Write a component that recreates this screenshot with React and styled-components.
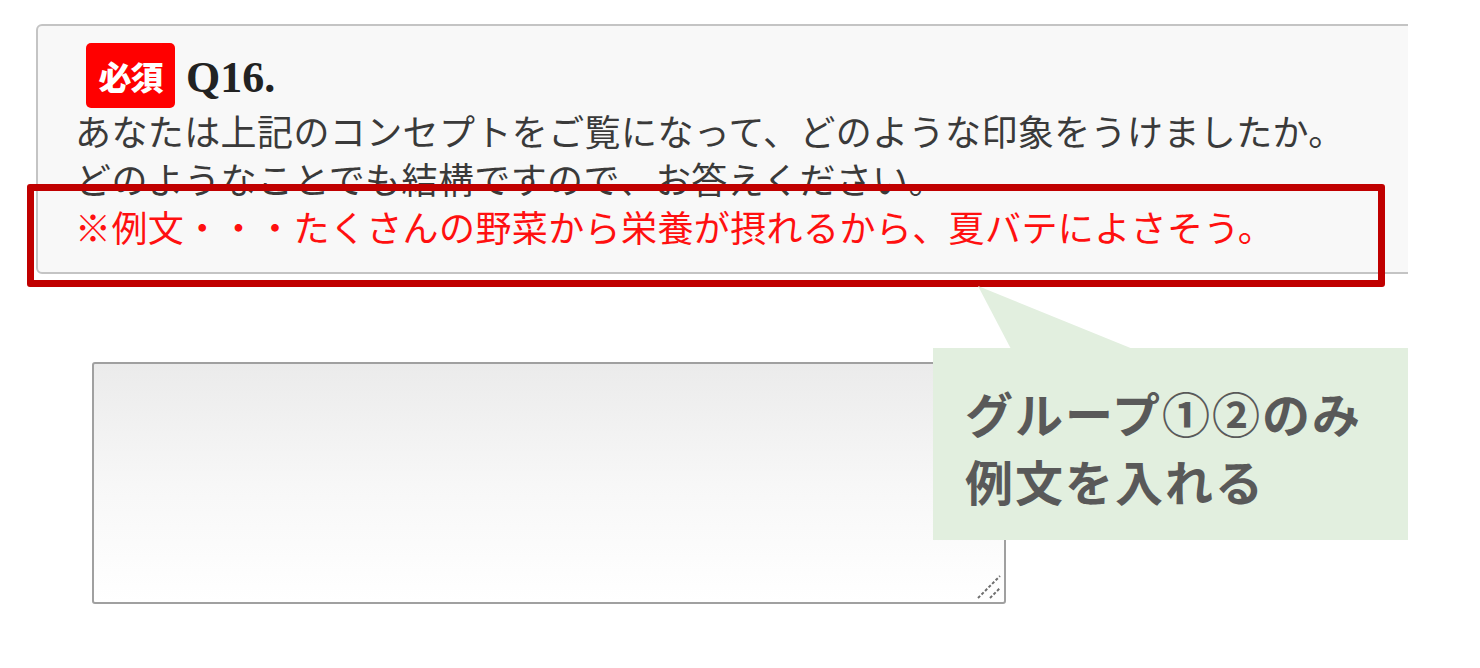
import styled, { createGlobalStyle } from 'styled-components'

const GlobalStyle = createGlobalStyle`
  html, body {
    margin: 0;
    padding: 0;
    background: #ffffff;
  }
  body {
    font-family: "Noto Sans CJK JP", "Noto Sans", sans-serif;
  }
`

const Page = styled.div`
  position: relative;
  width: 1480px;
  height: 668px;
  overflow: hidden;
  padding-top: 24px;
  box-sizing: border-box;
`

const CardClip = styled.div`
  margin-left: 36px;
  width: 1372px;
  overflow: hidden;
`

const Card = styled.section`
  width: 1400px;
  box-sizing: border-box;
  height: 250px;
  background: #f8f8f8;
  border: 2px solid #c4c4c4;
  border-radius: 6px;
  padding: 17px 0 0 37px;
`

const Header = styled.div`
  display: flex;
  align-items: center;
  gap: 11px;
  height: 65px;
  padding-left: 11px;
`

const Badge = styled.span`
  display: flex;
  align-items: center;
  justify-content: center;
  width: 89px;
  height: 65px;
  border-radius: 5px;
  background: #ff0000;
  color: #ffffff;
  font-family: "Noto Sans CJK JP", sans-serif;
  font-weight: 900;
  font-size: 33px;
  letter-spacing: -1px;
`

const QNumber = styled.span`
  font-family: "Liberation Serif", serif;
  font-weight: 700;
  font-size: 44px;
  color: #222;
  margin-top: 4px;
`

const Body = styled.div`
  margin-top: -2px;
`

const Line = styled.p`
  margin: 0;
  font-size: 36px;
  line-height: 48px;
  height: 48px;
  letter-spacing: 0.4px;
  white-space: nowrap;
  color: ${({ $red }) => ($red ? '#ff1010' : '#3a3a3a')};
`

const Highlight = styled.div`
  position: absolute;
  left: 27px;
  top: 184px;
  width: 1358px;
  height: 103px;
  box-sizing: border-box;
  border: 7px solid #c00000;
  border-radius: 3px;
  pointer-events: none;
`

const AnswerBox = styled.div`
  position: relative;
  margin: 88px 0 0 92px;
  width: 914px;
  height: 242px;
`

const Answer = styled.textarea`
  display: block;
  width: 100%;
  height: 100%;
  box-sizing: border-box;
  border: 2px solid #a0a0a0;
  border-radius: 3px;
  background: linear-gradient(to bottom, #ebebeb 0%, #f7f7f7 50%, #ffffff 100%);
  resize: none;
  outline: none;
`

const Grip = styled.svg`
  position: absolute;
  right: 5px;
  bottom: 5px;
  pointer-events: none;
`

const Callout = styled.div`
  position: absolute;
  left: 933px;
  top: 348px;
  width: 475px;
  height: 192px;
  box-sizing: border-box;
  background: #e2efdf;
  padding: 30px 0 0 32px;
`

const Tail = styled.svg`
  position: absolute;
  left: 0;
  top: -62px;
`

const CalloutText = styled.p`
  margin: 0;
  font-family: "Noto Sans CJK JP", sans-serif;
  font-weight: 700;
  font-size: 48px;
  line-height: 68px;
  letter-spacing: 2px;
  color: #595959;
  white-space: nowrap;
`

const App = () => {
  return (
    <>
      <GlobalStyle />
      <Page>
        <CardClip>
          <Card>
            <Header>
              <Badge>必須</Badge>
              <QNumber>Q16.</QNumber>
            </Header>
            <Body>
              <Line>あなたは上記のコンセプトをご覧になって、どのような印象をうけましたか。</Line>
              <Line>どのようなことでも結構ですので、お答えください。</Line>
              <Line $red>※例文・・・たくさんの野菜から栄養が摂れるから、夏バテによさそう。</Line>
            </Body>
          </Card>
        </CardClip>
        <AnswerBox>
          <Answer aria-label="回答" />
          <Grip width="24" height="24" viewBox="0 0 24 24">
            <line x1="1" y1="23" x2="23" y2="1" stroke="#6e6e6e" strokeWidth="2" strokeDasharray="3 2" />
            <line x1="13" y1="23" x2="23" y2="13" stroke="#6e6e6e" strokeWidth="2" strokeDasharray="3 2" />
          </Grip>
        </AnswerBox>
        <Highlight />
        <Callout>
          <Tail width="210" height="63" viewBox="0 0 210 63">
            <polygon points="45,0 78,63 200,63" fill="#e2efdf" />
          </Tail>
          <CalloutText>グループ①②のみ</CalloutText>
          <CalloutText>例文を入れる</CalloutText>
        </Callout>
      </Page>
    </>
  )
}

export default App
